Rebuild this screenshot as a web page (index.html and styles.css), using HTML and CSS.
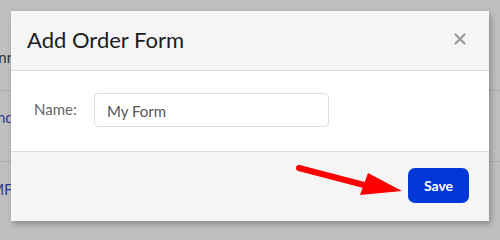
FILE: index.html
```html
<!DOCTYPE html>
<html>
<head>
<meta charset="utf-8">
<link rel="stylesheet" href="styles.css">
</head>
<body>
<div class="page">
  <div class="row row-first"><span class="cell dark">Conn</span></div>
  <div class="row"><span class="cell link">Vendor</span></div>
  <div class="row"><span class="cell link">AMF</span></div>
</div>
<div class="modal">
  <div class="modal-header">
    <h2 class="modal-title">Add Order Form</h2>
    <svg class="close" width="12" height="12" viewBox="0 0 12 12"><path d="M1.5 1.5 L10.5 10.5 M10.5 1.5 L1.5 10.5" stroke="#9a9a9a" stroke-width="2.2" stroke-linecap="round"/></svg>
  </div>
  <div class="modal-body">
    <label class="field-label">Name:</label>
    <div class="input">My Form</div>
  </div>
  <div class="modal-footer">
    <button class="btn-save">Save</button>
  </div>
</div>
<svg class="arrow" width="500" height="233" viewBox="0 0 500 233">
  <line x1="299" y1="168" x2="368" y2="186" stroke="#ff0000" stroke-width="6" stroke-linecap="round"/>
  <polygon points="368,173 402,191 360,195" fill="#ff0000"/>
</svg>
</body>
</html>
```
FILE: styles.css
```css
html, body {
  margin: 0;
  padding: 0;
}
body {
  width: 500px;
  height: 233px;
  background: #bfbfbf;
  font-family: Lato, "Open Sans", sans-serif;
  overflow: hidden;
  position: relative;
}
.page {
  display: flex;
  flex-direction: column;
  padding-top: 20px;
}
.row {
  height: 71px;
  border-bottom: 1px solid #acacac;
  display: flex;
  align-items: center;
  box-sizing: border-box;
  margin-left: -20px;
}
.row-first {
  height: 71px;
  align-items: flex-start;
  padding-top: 28px;
}
.row:nth-child(2) { align-items: flex-start; padding-top: 17px; }
.row:nth-child(3) { align-items: flex-start; padding-top: 18px; border-bottom: none; }
.cell {
  font-size: 15px;
  white-space: nowrap;
}
.dark { color: #333; }
.link { color: #2a3a9a; }
.modal {
  position: absolute;
  left: 11px;
  top: 11px;
  width: 478px;
  background: #fff;
  box-shadow: 2px 3px 6px rgba(0,0,0,0.28);
  display: flex;
  flex-direction: column;
}
.modal-header {
  height: 59px;
  background: #f5f5f5;
  border-bottom: 1px solid #dcdcdc;
  display: flex;
  align-items: center;
  justify-content: space-between;
  padding: 0 23px 0 16px;
}
.modal-title {
  margin: 0;
  font-size: 22px;
  font-weight: 400;
  color: #1c1c1c;
  padding-bottom: 3px;
}
.close {
  display: block;
  margin-bottom: 3px;
}
.modal-body {
  height: 80px;
  box-sizing: border-box;
  padding: 22px 23px;
  display: flex;
  align-items: flex-start;
}
.field-label {
  width: 60px;
  font-size: 15px;
  color: #666;
  padding-top: 7px;
}
.input {
  width: 235px;
  height: 34px;
  box-sizing: border-box;
  border: 1px solid #dedede;
  border-radius: 4px;
  padding: 0 12px;
  display: flex;
  align-items: center;
  font-size: 15px;
  color: #555;
  padding-top: 2px;
}
.modal-footer {
  height: 70px;
  box-sizing: border-box;
  background: #f5f5f5;
  border-top: 1px solid #dcdcdc;
  display: flex;
  justify-content: flex-end;
  align-items: flex-start;
  padding: 16px 20px 0 0;
}
.btn-save {
  width: 61px;
  height: 35px;
  border: none;
  border-radius: 7px;
  background: #0037d6;
  color: #fff;
  font-family: Lato, sans-serif;
  font-size: 14px;
  font-weight: 700;
  padding: 0;
}
.arrow {
  position: absolute;
  left: 0;
  top: 0;
  pointer-events: none;
}
```
